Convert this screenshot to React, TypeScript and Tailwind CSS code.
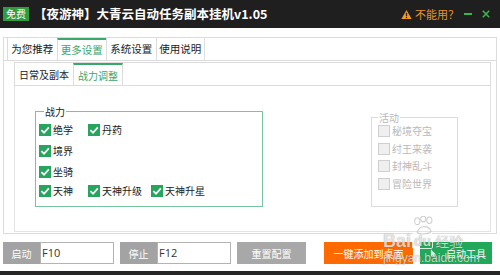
import React from "react";

const CJK = "font-['Noto_Sans_CJK_SC','Noto_Sans',sans-serif]";

const Check: React.FC<{ label: string; on?: boolean; className?: string }> = ({ label, on = true, className = "" }) => {
  return (
    <div className={`flex h-[12px] items-center gap-[2px] ${className}`}>
      {on ? (
        <span className="flex size-[12px] shrink-0 items-center justify-center bg-[#27a55e]">
          <svg viewBox="0 0 12 12" className="size-[12px]">
            <path d="M2.4 6.2 L5 8.7 L9.8 3.4" fill="none" stroke="#fff" strokeWidth="1.7" />
          </svg>
        </span>
      ) : (
        <span className="size-[12px] shrink-0 border border-[#cfcfcf] bg-[#efefef]" />
      )}
      <span className={`text-[10px] leading-[12px] ${on ? "text-[#222]" : "text-[#b9b9b9]"}`}>{label}</span>
    </div>
  );
};

const KeyField: React.FC<{ label: string; value: string }> = ({ label, value }) => {
  return (
    <div className="flex h-[22px] w-[111px]">
      <div className="flex w-[37px] items-center justify-center bg-[#a3a3a3] text-[10px] text-white">{label}</div>
      <div className="flex flex-1 items-center border border-[#b3b3b3] bg-white pl-[1px] font-['Open_Sans',sans-serif] text-[11px] text-[#333]">
        {value}
      </div>
    </div>
  );
};

export default function App() {
  const mainTabs = ["为您推荐", "更多设置", "系统设置", "使用说明"];

  return (
    <div className={`relative flex h-[275px] w-[500px] flex-col overflow-hidden bg-white ${CJK}`}>
      {/* title bar */}
      <div className="flex h-[28px] shrink-0 items-center bg-[#1f1f1f] pl-[3px] pr-[10px]">
        <span className="flex h-[14px] w-[26px] items-center justify-center bg-[#2f9d3f] text-[10px] leading-none text-white">
          免费
        </span>
        <span className="ml-[5px] text-[12.5px] font-bold text-white">【夜游神】大青云自动任务副本挂机v1.05</span>
        <div className="ml-auto flex items-center">
          <svg viewBox="0 0 12 11" className="h-[11px] w-[11px]">
            <path d="M6 0.5 L11.6 10.5 L0.4 10.5 Z" fill="#f39a1e" />
            <rect x="5.3" y="3.6" width="1.4" height="3.8" fill="#1f1f1f" />
            <rect x="5.3" y="8.2" width="1.4" height="1.3" fill="#1f1f1f" />
          </svg>
          <span className="ml-[3px] text-[11px] text-[#e9912b]">不能用？</span>
          <span className="ml-[5px] h-[2px] w-[8px] bg-[#3cb44a]" />
          <svg viewBox="0 0 10 10" className="ml-[10px] size-[8px]">
            <path d="M1 1 L9 9 M9 1 L1 9" stroke="#3cb44a" strokeWidth="2" />
          </svg>
        </div>
      </div>

      {/* main tabs */}
      <div className="px-[3px] pt-[9px]">
        <div className="flex h-[24px] border border-[#dcdcdc] pl-[3px]">
          {mainTabs.map((t, i) => (
            <div
              key={t}
              className={`flex w-[49.5px] items-center justify-center border-l border-[#dcdcdc] text-[10.5px] ${
                i === 1 ? "border-t-2 border-t-[#3aa76d] text-[#3aa76d]" : "text-[#222]"
              } ${i === 3 ? "border-r" : ""}`}
            >
              {t}
            </div>
          ))}
        </div>

        <div className="flex h-[173px] flex-col border-x border-b border-[#dcdcdc] pb-[1px] pl-[10px] pr-[5px] pt-[1px]">
          {/* sub tabs */}
          <div className="flex h-[24px] shrink-0 border border-[#dcdcdc]">
            <div className="flex w-[58px] items-center justify-center text-[10px] text-[#222]">日常及副本</div>
            <div className="flex w-[50px] items-center justify-center border-x border-t-2 border-[#dcdcdc] border-t-[#3aa76d] text-[10px] text-[#3aa76d]">
              战力调整
            </div>
          </div>

          <div className="flex flex-1 items-start border-x border-b border-[#e3e3e3] pl-[20px] pt-[19px]">
            <fieldset className="h-[102px] w-[228px] border border-[#78c3a0] pl-[3px]">
              <legend className="ml-[5px] px-[1px] text-[10px] leading-[13px] text-[#222]">战力</legend>
              <div className="mt-[6px] flex">
                <Check label="绝学" className="w-[49px]" />
                <Check label="丹药" />
              </div>
              <div className="mt-[9px] flex">
                <Check label="境界" />
              </div>
              <div className="mt-[9px] flex">
                <Check label="坐骑" />
              </div>
              <div className="mt-[7px] flex">
                <Check label="天神" className="w-[49px]" />
                <Check label="天神升级" className="w-[63px]" />
                <Check label="天神升星" />
              </div>
            </fieldset>

            <fieldset className="ml-[108px] mt-[6px] h-[96px] w-[87px] border border-[#dcdcdc] pl-[6px]">
              <legend className="ml-[0px] px-[1px] text-[10px] leading-[13px] text-[#b9b9b9]">活动</legend>
              <div className="mt-[1px] flex flex-col gap-[5.5px]">
                <Check label="秘境夺宝" on={false} />
                <Check label="纣王来袭" on={false} />
                <Check label="封神乱斗" on={false} />
                <Check label="冒险世界" on={false} />
              </div>
            </fieldset>
          </div>
        </div>
      </div>

      {/* bottom buttons */}
      <div className="mt-[8px] flex h-[22px] items-stretch pl-[3px]">
        <KeyField label="启动" value="F10" />
        <div className="ml-[6px]">
          <KeyField label="停止" value="F12" />
        </div>
        <div className="ml-[6px] flex w-[69px] items-center justify-center bg-[#a8a8a8] text-[10px] text-white">重置配置</div>
        <div className="ml-[18px] flex w-[89px] items-center justify-center bg-[#ff6a00] text-[10px] text-white">
          一键添加到桌面
        </div>
        <div className="ml-[7px] flex w-[72px] items-center justify-center gap-[9px] bg-[#22a85a] pl-[4px] text-[10px] text-white">
          <svg viewBox="0 0 8 10" className="h-[9px] w-[7px]">
            <path d="M1 0.5 L1 9 L3 7 L4.6 9.6 L5.8 9 L4.3 6.4 L7 6.2 Z" fill="#fff" opacity="0.85" />
          </svg>
          <span>启动工具</span>
        </div>
      </div>

      <div className="mt-auto h-[4px] bg-[#262626]" />

      {/* watermark */}
      <div className="pointer-events-none absolute left-[383px] top-[216px] flex flex-col text-white/75 [text-shadow:0_0_1px_rgba(0,0,0,0.45)]">
        <svg viewBox="0 0 30 22" className="ml-[27px] h-[19px] w-[30px] opacity-70">
          <g fill="none" stroke="#bbb" strokeWidth="1.2">
            <ellipse cx="6" cy="6" rx="3" ry="4" />
            <ellipse cx="13" cy="3.5" rx="3" ry="3.3" />
            <ellipse cx="20" cy="5" rx="3" ry="3.8" />
            <path d="M6 19 C 8 11, 18 10, 22 17 C 23 21, 8 22, 6 19 Z" />
          </g>
        </svg>
        <div className="-mt-[3px] flex items-center font-['Liberation_Sans',sans-serif] leading-none">
          <span className="text-[18px] font-bold">Bai</span>
          <span className="ml-[1px] rounded-[2px] border border-white/80 px-[1px] text-[14px] font-bold">du</span>
          <span className={`ml-[2px] text-[14px] ${CJK}`}>经验</span>
        </div>
        <span className="mt-[2px] font-['Liberation_Sans',sans-serif] text-[12px] leading-none">jingyan.baidu.com</span>
      </div>
    </div>
  );
}
